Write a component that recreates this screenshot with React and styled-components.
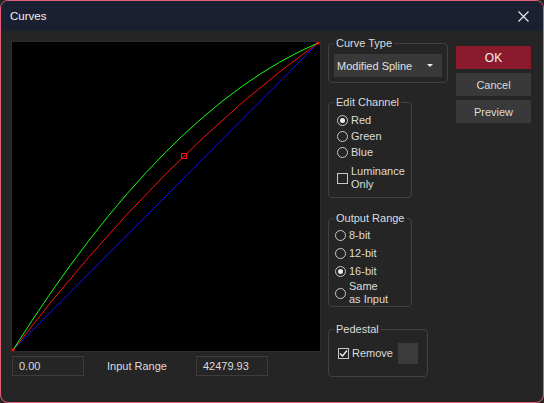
import React from "react"
import styled, { createGlobalStyle } from "styled-components"

const GlobalStyle = createGlobalStyle`
  html, body {
    margin: 0;
    padding: 0;
    background: #252525;
  }
  body {
    font-family: "Liberation Sans", Arial, sans-serif;
    font-size: 11px;
    color: #dcdcdc;
  }
`

const Window = styled.div`
  width: 544px;
  height: 403px;
  box-sizing: border-box;
  border: 1px solid #e2607a;
  border-radius: 8px;
  overflow: hidden;
  background: #252525;
  display: flex;
  flex-direction: column;
`

const TitleBar = styled.div`
  height: 30px;
  flex: none;
  background: #1b2030;
  display: flex;
  align-items: center;
  justify-content: space-between;
  padding: 0 14px 0 9px;
`

const Title = styled.span`
  font-size: 11.5px;
  color: #f2f2f2;
`

const Body = styled.div`
  display: flex;
  padding: 11px 0 0 11px;
`

const LeftColumn = styled.div`
  display: flex;
  flex-direction: column;
`

const Canvas = styled.div`
  width: 308px;
  height: 309px;
  background: #000;
  box-shadow: 0 0 0 1px #2c2c2c;
`

const BottomRow = styled.div`
  display: flex;
  align-items: center;
  margin-top: 5px;
`

const Field = styled.div`
  width: 72px;
  height: 20px;
  box-sizing: border-box;
  border: 1px solid #3c3c3c;
  display: flex;
  align-items: center;
  padding-left: 6px;
  color: #dcdcdc;
`

const FieldLabel = styled.span`
  margin: 0 29px 0 23px;
`

const GroupColumn = styled.div`
  display: flex;
  flex-direction: column;
  margin-left: 8px;
`

const Group = styled.div`
  position: relative;
  box-sizing: border-box;
  width: ${(p) => p.$w}px;
  height: ${(p) => p.$h}px;
  margin-top: ${(p) => p.$mt}px;
  border: 1px solid #414141;
  border-radius: 4px;
  padding: ${(p) => p.$pad || "0"};
`

const Legend = styled.span`
  position: absolute;
  top: -8px;
  left: 5px;
  padding: 0 2px;
  background: #252525;
  line-height: 14px;
  color: #dcdcdc;
`

const Select = styled.div`
  height: 23px;
  background: #393939;
  display: flex;
  align-items: center;
  justify-content: space-between;
  padding: 0 9px 0 3px;
  color: #e0e0e0;
`

const Caret = styled.span`
  width: 0;
  height: 0;
  border-left: 3px solid transparent;
  border-right: 3px solid transparent;
  border-top: 3px solid #eee;
`

const Option = styled.div`
  display: flex;
  align-items: center;
  height: ${(p) => p.$h || 16}px;
  line-height: 13px;
`

const Radio = styled.span`
  flex: none;
  width: 11px;
  height: 11px;
  box-sizing: border-box;
  border: 1px solid #c8c8c8;
  border-radius: 50%;
  margin-right: 3px;
  display: flex;
  align-items: center;
  justify-content: center;
  &::after {
    content: "";
    display: ${(p) => (p.$on ? "block" : "none")};
    width: 5px;
    height: 5px;
    border-radius: 50%;
    background: #ececec;
  }
`

const Check = styled.span`
  flex: none;
  width: 11px;
  height: 11px;
  box-sizing: border-box;
  border: 1px solid #c8c8c8;
  margin-right: 3px;
  display: flex;
  align-items: center;
  justify-content: center;
`

const Swatch = styled.span`
  width: 20px;
  height: 21px;
  background: #3b3b3b;
  margin-left: 5px;
`

const ButtonColumn = styled.div`
  display: flex;
  flex-direction: column;
  gap: 4px;
  margin-left: 8px;
  padding-top: 4px;
`

const Button = styled.div`
  width: 75px;
  height: 23px;
  display: flex;
  align-items: center;
  justify-content: center;
  background: ${(p) => (p.$primary ? "#8a1a2c" : "#393939")};
  color: ${(p) => (p.$primary ? "#f4f4f4" : "#dcdcdc")};
  font-size: ${(p) => (p.$primary ? "12px" : "11px")};
`

const CurvePlot = () => (
  <svg width="308" height="309" viewBox="0 0 308 309">
    <line x1="1" y1="308" x2="306" y2="1" stroke="#1010ff" strokeWidth="1" />
    <path d="M1 308 Q153.5 110 306 1" fill="none" stroke="#ff1010" strokeWidth="1" />
    <path d="M1 308 Q153.5 66 306 1" fill="none" stroke="#10ff10" strokeWidth="1" />
    <rect x="-0.5" y="306.5" width="3" height="3" fill="#ff1010" />
    <rect x="304.5" y="-0.5" width="3" height="3" fill="#ff1010" />
    <rect x="169.5" y="111.5" width="5" height="5" fill="none" stroke="#ff1010" strokeWidth="1" />
    <rect x="171.5" y="113.5" width="1" height="1" fill="#ff1010" />
  </svg>
)

const CloseIcon = () => (
  <svg width="11" height="11" viewBox="0 0 11 11">
    <path d="M0.5 0.5 L10.5 10.5 M10.5 0.5 L0.5 10.5" stroke="#f0f0f0" strokeWidth="1.1" />
  </svg>
)

const CheckMark = () => (
  <svg width="9" height="9" viewBox="0 0 9 9">
    <path d="M1 4.5 L3.5 7 L8 1.5" fill="none" stroke="#f0f0f0" strokeWidth="1.4" />
  </svg>
)

const App = () => {
  return (
    <>
      <GlobalStyle />
      <Window>
        <TitleBar>
          <Title>Curves</Title>
          <CloseIcon />
        </TitleBar>
        <Body>
          <LeftColumn>
            <Canvas>
              <CurvePlot />
            </Canvas>
            <BottomRow>
              <Field>0.00</Field>
              <FieldLabel>Input Range</FieldLabel>
              <Field>42479.93</Field>
            </BottomRow>
          </LeftColumn>

          <GroupColumn>
            <Group $w={120} $h={40} $mt={1} $pad="10px 5px 0 5px">
              <Legend>Curve Type</Legend>
              <Select>
                Modified Spline
                <Caret />
              </Select>
            </Group>

            <Group $w={84} $h={96} $mt={19} $pad="9px 0 0 8px">
              <Legend>Edit Channel</Legend>
              <Option>
                <Radio $on />
                Red
              </Option>
              <Option>
                <Radio />
                Green
              </Option>
              <Option>
                <Radio />
                Blue
              </Option>
              <Option $h={36}>
                <Check />
                <span>
                  Luminance
                  <br />
                  Only
                </span>
              </Option>
            </Group>

            <Group $w={84} $h={89} $mt={20} $pad="7px 0 0 6px">
              <Legend>Output Range</Legend>
              <Option $h={18}>
                <Radio />
                8-bit
              </Option>
              <Option $h={18}>
                <Radio />
                12-bit
              </Option>
              <Option $h={18}>
                <Radio $on />
                16-bit
              </Option>
              <Option $h={26}>
                <Radio />
                <span>
                  Same
                  <br />
                  as Input
                </span>
              </Option>
            </Group>

            <Group $w={100} $h={48} $mt={22} $pad="13px 0 0 9px">
              <Legend>Pedestal</Legend>
              <Option $h={21}>
                <Check>
                  <CheckMark />
                </Check>
                Remove
                <Swatch />
              </Option>
            </Group>
          </GroupColumn>

          <ButtonColumn>
            <Button $primary>OK</Button>
            <Button>Cancel</Button>
            <Button>Preview</Button>
          </ButtonColumn>
        </Body>
      </Window>
    </>
  )
}

export default App
